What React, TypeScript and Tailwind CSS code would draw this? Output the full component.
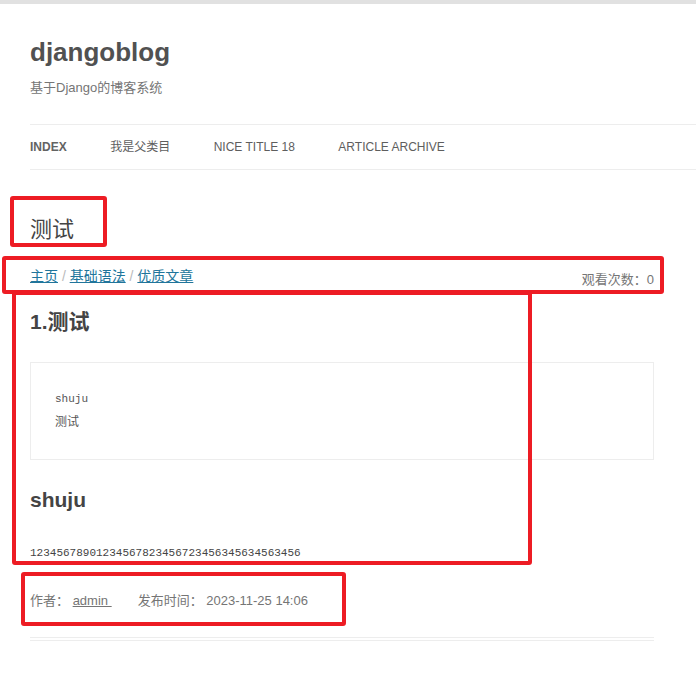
const font = "font-['Liberation_Sans','Noto_Sans_CJK_SC',sans-serif]";
const mono = "font-['Liberation_Mono','Noto_Sans_CJK_SC',monospace]";

const Mark = ({ className }: { className: string }) => (
  <div className={`absolute border-[4px] border-[#ed1c24] rounded-[3px] pointer-events-none ${className}`} />
);

const App = () => {
  return (
    <div className={`relative w-[696px] h-[687px] bg-white overflow-hidden text-[#444] ${font}`}>
      <div className="h-[4px] bg-[#e1e1e1]" />

      <header className="ml-[30px] pt-[24px]">
        <h1 className="text-[26px] leading-[48px] font-bold text-[#515151]">djangoblog</h1>
        <p className="text-[13px] leading-[24px] text-[#757575]">基于Django的博客系统</p>
        <nav className="mt-[24px] border-y border-[#ededed] flex gap-[43.5px] text-[12px] leading-[44px] uppercase text-[#5e5e5e]">
          <span className="font-bold text-[#636363]">Index</span>
          <span>我是父类目</span>
          <span>Nice title 18</span>
          <span>Article archive</span>
        </nav>
      </header>

      <main className="ml-[30px] w-[624px]">
        <h1 className="mt-[47px] text-[22px] leading-[26px]">测试</h1>

        <div className="mt-[21px] flex items-end justify-between">
          <div className="text-[14px] leading-[24px]">
            <a className="text-[#21759b] underline">主页</a>
            <span className="text-[#bbb]"> / </span>
            <a className="text-[#21759b] underline">基础语法</a>
            <span className="text-[#bbb]"> / </span>
            <a className="text-[#21759b] underline">优质文章</a>
          </div>
          <div className="text-[13px] leading-[16px] text-[#757575]">观看次数：0</div>
        </div>

        <h1 className="mt-[15px] text-[21px] leading-[38px] font-bold">1.测试</h1>

        <pre className={`mt-[21px] border border-[#ededed] p-[24px] text-[11px] leading-[24px] text-[#555] ${mono}`}>
          {"shuju\n"}
          <span className="text-[12px]">测试</span>
        </pre>

        <h2 className="mt-[21px] text-[21px] leading-[38px] font-bold">shuju</h2>

        <p className={`mt-[22px] text-[11px] leading-[24px] ${mono}`}>12345678901234567823456723456345634563456</p>

        <div className="mt-[24px] text-[13px] leading-[24px] text-[#757575] whitespace-pre">
          <span>作者： </span>
          <a className="underline">{"admin\u00a0"}</a>
          <span className="ml-[26px]">发布时间： 2023-11-25 14:06</span>
        </div>

        <div className="mt-[24px] border-b border-[#ededed]" />
        <div className="mt-[2px] border-b border-[#ededed]" />
      </main>

      <Mark className="left-[10px] top-[196px] w-[97px] h-[51px]" />
      <Mark className="left-[2px] top-[256px] w-[662px] h-[38px]" />
      <Mark className="left-[12px] top-[291px] w-[520px] h-[274px]" />
      <Mark className="left-[21px] top-[572px] w-[325px] h-[54px]" />
    </div>
  );
};

export default App;
